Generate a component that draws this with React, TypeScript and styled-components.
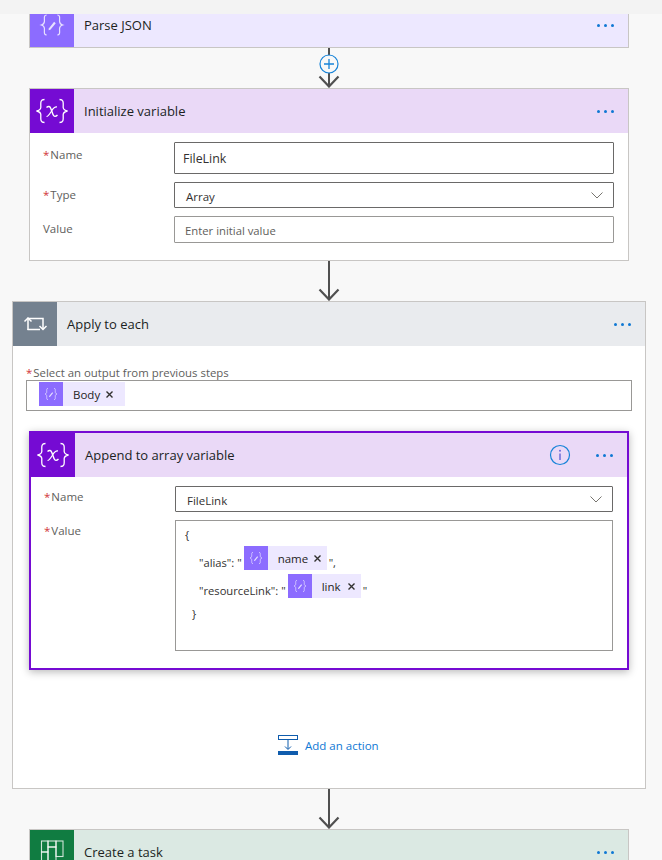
import styled, { createGlobalStyle } from "styled-components";

const GlobalStyle = createGlobalStyle`
  html, body {
    margin: 0;
    padding: 0;
    background: #f8f8f8;
    overflow: hidden;
  }
  * {
    box-sizing: border-box;
  }
`;

const Page = styled.div`
  width: 662px;
  height: 860px;
  overflow: hidden;
  background: #f8f8f8;
  font-family: "Open Sans", "Noto Sans", sans-serif;
  color: #252423;
`;

const TopBand = styled.div`
  height: 14px;
  background: #f3f3f3;
`;

const Canvas = styled.div`
  width: 658px;
  display: flex;
  flex-direction: column;
  align-items: center;
`;

const Card = styled.div`
  width: 600px;
  flex-shrink: 0;
  background: #fff;
  border: 1px solid #c8c6c4;
`;

const ClippedCard = styled(Card)`
  height: 34px;
  border-top: none;
  overflow: hidden;
`;

const ClippedHeader = styled.div`
  margin-top: -11px;
`;

const LoopCard = styled(Card)`
  width: 634px;
`;

const ActiveCard = styled(Card)`
  border: 2px solid #750bd3;
  box-shadow: 0 2px 8px rgba(0, 0, 0, 0.28);
`;

const Header = styled.div<{ $bg: string }>`
  height: 44px;
  display: flex;
  align-items: center;
  background: ${(p) => p.$bg};
`;

const IconTile = styled.div<{ $bg: string }>`
  width: 44px;
  height: 44px;
  flex-shrink: 0;
  display: flex;
  align-items: center;
  justify-content: center;
  background: ${(p) => p.$bg};
`;

const Title = styled.div`
  margin-left: 10px;
  flex: 1;
  font-size: 13px;
  line-height: 18px;
  color: #201f1e;
`;

const Dots = styled.div`
  width: 17px;
  margin-right: 14px;
  display: flex;
  justify-content: space-between;
  span {
    width: 3px;
    height: 3px;
    background: #0f78d4;
    border-radius: 50%;
  }
`;

const InfoIcon = styled.svg`
  margin-right: 25px;
`;

const Fields = styled.div`
  padding: 9px 14px 17px 13px;
  display: flex;
  flex-direction: column;
  gap: 8px;
`;

const Row = styled.div`
  display: grid;
  grid-template-columns: 131px 1fr;
`;

const Label = styled.div<{ $top?: number }>`
  font-size: 11.5px;
  line-height: 16px;
  padding-top: ${(p) => p.$top ?? 5}px;
  color: #605e5c;
`;

const Star = styled.span`
  color: #d13438;
  margin-right: 1px;
`;

const TextBox = styled.div<{ $height: number; $light?: boolean }>`
  height: ${(p) => p.$height}px;
  border: 1px solid ${(p) => (p.$light ? "#999896" : "#6a6968")};
  border-radius: 1px;
  display: flex;
  align-items: center;
  justify-content: space-between;
  background: #fff;
`;

const InputText = styled.span`
  margin: 1px 0 0 8px;
  font-size: 12.4px;
  color: #323130;
`;

const SelectText = styled.span`
  margin: 2px 0 0 11px;
  font-size: 11.5px;
  color: #323130;
`;

const Placeholder = styled.span`
  margin: 2px 0 0 10px;
  font-size: 11.3px;
  color: #605e5c;
`;

const Chevron = styled.svg`
  margin-right: 10px;
`;

const LoopBody = styled.div`
  padding: 20px 0 33px;
  display: flex;
  flex-direction: column;
  align-items: center;
`;

const OutputLabel = styled.div`
  width: 606px;
  height: 14px;
  font-size: 11.4px;
  line-height: 14px;
  color: #605e5c;
`;

const TokenBox = styled.div`
  width: 606px;
  height: 31px;
  margin-bottom: 20px;
  padding: 1px 0 0 12px;
  border: 1px solid #999896;
  display: flex;
  align-items: flex-start;
`;

const Token = styled.span<{ $width: number }>`
  width: ${(p) => p.$width}px;
  height: 24px;
  flex-shrink: 0;
  display: inline-flex;
  align-items: center;
  background: #ede8ff;
  font-size: 11.5px;
  color: #252423;
`;

const TokenIcon = styled.span`
  width: 24px;
  height: 24px;
  flex-shrink: 0;
  display: flex;
  align-items: center;
  justify-content: center;
  background: #8c6cff;
`;

const TokenName = styled.span<{ $gap: number }>`
  margin-left: ${(p) => p.$gap}px;
  flex: 1;
`;

const TokenClose = styled.svg<{ $right: number }>`
  margin-right: ${(p) => p.$right}px;
`;

const CodeBox = styled.div`
  height: 131px;
  padding: 5px 0 0 9px;
  border: 1px solid #999896;
  display: flex;
  flex-direction: column;
  font-size: 11.2px;
  color: #323130;
`;

const BraceLine = styled.div<{ $indent: number }>`
  height: 20px;
  line-height: 17px;
  margin-left: ${(p) => p.$indent}px;
`;

const CodeLine = styled.div`
  height: 24px;
  margin: 0 0 4px 14px;
  display: flex;
  align-items: center;
  gap: 2px;
`;

const CodeText = styled.span`
  padding-top: 8px;
`;

const ClosingBrace = styled(BraceLine)`
  margin-top: 3px;
`;

const AddAction = styled.div`
  margin-top: 65px;
  height: 20px;
  width: 102px;
  display: flex;
  align-items: center;
  gap: 7px;
  font-size: 11.5px;
  color: #0f78d4;
  white-space: nowrap;
`;

function Connector({ plus }: { plus?: boolean }) {
  return (
    <svg width="22" height="40" viewBox="0 0 22 40" style={{ flexShrink: 0 }}>
      <path d="M11 0V38" stroke="#505050" strokeWidth="2" fill="none" />
      <path d="M1.5 28.5L11 38.5L20.5 28.5" stroke="#505050" strokeWidth="2.2" fill="none" />
      {plus && (
        <g>
          <circle cx="11" cy="16" r="9" fill="#f8f8f8" stroke="#1683d8" strokeWidth="1.2" />
          <path d="M11 11V21M6 16H16" stroke="#1683d8" strokeWidth="1.3" fill="none" />
        </g>
      )}
    </svg>
  );
}

function BracePencil({ size }: { size: number }) {
  return (
    <svg width={size} height={size} viewBox="0 0 24 24" fill="none">
      <path
        d="M8 4.5C5.5 4.5 6.5 7 6.3 9.5C6.2 11 5.3 11.6 4 12C5.3 12.4 6.2 13 6.3 14.5C6.5 17 5.5 19.5 8 19.5"
        stroke="#fff"
        strokeOpacity="0.8"
        strokeWidth="0.9"
      />
      <path
        d="M16 4.5C18.5 4.5 17.5 7 17.7 9.5C17.8 11 18.7 11.6 20 12C18.7 12.4 17.8 13 17.7 14.5C17.5 17 18.5 19.5 16 19.5"
        stroke="#fff"
        strokeOpacity="0.8"
        strokeWidth="0.9"
      />
      <path d="M9.6 14.6L13.6 9.6L14.8 10.6L10.8 15.6L9.4 16Z" fill="#fff" fillOpacity="0.8" />
    </svg>
  );
}

function VariableIcon() {
  return (
    <svg width="36" height="30" viewBox="0 0 36 30" fill="none">
      <path
        d="M10.5 3.5C5.5 3.5 7 8 6.8 11.5C6.7 13.6 5 14.4 2.5 15C5 15.6 6.7 16.4 6.8 18.5C7 22 5.5 26.5 10.5 26.5"
        stroke="#fff"
        strokeWidth="1.3"
      />
      <path
        d="M25.5 3.5C30.5 3.5 29 8 29.2 11.5C29.3 13.6 31 14.4 33.5 15C31 15.6 29.3 16.4 29.2 18.5C29 22 30.5 26.5 25.5 26.5"
        stroke="#fff"
        strokeWidth="1.3"
      />
      <path
        d="M12.5 11.5C14.5 9.8 16 10.3 16.8 12.5L19 18.5C19.8 20.7 21.5 21 23.5 19"
        stroke="#fff"
        strokeWidth="1.4"
      />
      <path d="M12.5 20.5C14.5 20.5 15.5 18.5 17.2 15.5C18.8 12.5 20.2 10.5 23 10.8" stroke="#fff" strokeWidth="1.2" />
    </svg>
  );
}

function LoopIcon() {
  return (
    <svg width="24" height="18" viewBox="0 0 24 18" fill="none" stroke="#fff" strokeWidth="1.5">
      <path d="M5 15V3.5H20V14" />
      <path d="M1.5 6.5L5 3L8.5 6.5" />
      <path d="M4.5 14.5H17" />
      <path d="M16.5 11L20 14.5L23.5 11" />
    </svg>
  );
}

function PlannerIcon() {
  return (
    <svg width="24" height="24" viewBox="0 0 24 24" fill="none" stroke="#fff" strokeOpacity="0.8" strokeWidth="1.1">
      <rect x="1.5" y="1" width="6.5" height="11" />
      <rect x="1.5" y="12" width="6.5" height="11" />
      <rect x="8" y="1" width="8" height="6" />
      <rect x="8" y="7" width="8" height="16" />
      <rect x="16" y="1" width="7" height="15.5" />
    </svg>
  );
}

function CloseX({ right }: { right: number }) {
  return (
    <TokenClose $right={right} width="9" height="9" viewBox="0 0 9 9" fill="none" stroke="#323130" strokeWidth="1.4">
      <path d="M1.5 1.5L7.5 7.5M7.5 1.5L1.5 7.5" />
    </TokenClose>
  );
}

function ThreeDots() {
  return (
    <Dots>
      <span />
      <span />
      <span />
    </Dots>
  );
}

function ChevronDown() {
  return (
    <Chevron width="12" height="7" viewBox="0 0 12 7" fill="none" stroke="#77756f" strokeWidth="1">
      <path d="M0.5 0.5L6 6L11.5 0.5" />
    </Chevron>
  );
}

export default function App() {
  return (
    <Page>
      <GlobalStyle />
      <TopBand />
      <Canvas>
        <ClippedCard>
          <ClippedHeader>
            <Header $bg="#ede8ff">
              <IconTile $bg="#8c6cff">
                <BracePencil size={32} />
              </IconTile>
              <Title>Parse JSON</Title>
              <ThreeDots />
            </Header>
          </ClippedHeader>
        </ClippedCard>
        <Connector plus />
        <Card>
          <Header $bg="#ead9f7">
            <IconTile $bg="#750bd3">
              <VariableIcon />
            </IconTile>
            <Title>Initialize variable</Title>
            <ThreeDots />
          </Header>
          <Fields>
            <Row>
              <Label>
                <Star>*</Star>Name
              </Label>
              <TextBox $height={32}>
                <InputText>FileLink</InputText>
              </TextBox>
            </Row>
            <Row>
              <Label>
                <Star>*</Star>Type
              </Label>
              <TextBox $height={26}>
                <SelectText>Array</SelectText>
                <ChevronDown />
              </TextBox>
            </Row>
            <Row>
              <Label>Value</Label>
              <TextBox $height={27} $light>
                <Placeholder>Enter initial value</Placeholder>
              </TextBox>
            </Row>
          </Fields>
        </Card>
        <Connector />
        <LoopCard>
          <Header $bg="#e9ebee">
            <IconTile $bg="#74818f">
              <LoopIcon />
            </IconTile>
            <Title>Apply to each</Title>
            <ThreeDots />
          </Header>
          <LoopBody>
            <OutputLabel>
              <Star>*</Star>Select an output from previous steps
            </OutputLabel>
            <TokenBox>
              <Token $width={86}>
                <TokenIcon>
                  <BracePencil size={18} />
                </TokenIcon>
                <TokenName $gap={10}>Body</TokenName>
                <CloseX right={11} />
              </Token>
            </TokenBox>
            <ActiveCard>
              <Header $bg="#ead9f7">
                <IconTile $bg="#750bd3">
                  <VariableIcon />
                </IconTile>
                <Title>Append to array variable</Title>
                <InfoIcon width="22" height="22" viewBox="0 0 22 22" fill="none">
                  <circle cx="11" cy="11" r="9.5" stroke="#1683d8" strokeWidth="1.2" />
                  <path d="M11 9.5V16" stroke="#6a6ad8" strokeWidth="1.5" />
                  <circle cx="11" cy="6.8" r="1" fill="#6a6ad8" />
                </InfoIcon>
                <ThreeDots />
              </Header>
              <Fields>
                <Row>
                  <Label $top={3}>
                    <Star>*</Star>Name
                  </Label>
                  <TextBox $height={26}>
                    <SelectText>FileLink</SelectText>
                    <ChevronDown />
                  </TextBox>
                </Row>
                <Row>
                  <Label $top={3}>
                    <Star>*</Star>Value
                  </Label>
                  <CodeBox>
                    <BraceLine $indent={0}>{"{"}</BraceLine>
                    <CodeLine>
                      <CodeText>"alias": "</CodeText>
                      <Token $width={83}>
                        <TokenIcon>
                          <BracePencil size={18} />
                        </TokenIcon>
                        <TokenName $gap={10}>name</TokenName>
                        <CloseX right={5} />
                      </Token>
                      <CodeText>",</CodeText>
                    </CodeLine>
                    <CodeLine>
                      <CodeText>"resourceLink": "</CodeText>
                      <Token $width={73}>
                        <TokenIcon>
                          <BracePencil size={18} />
                        </TokenIcon>
                        <TokenName $gap={10}>link</TokenName>
                        <CloseX right={5} />
                      </Token>
                      <CodeText>"</CodeText>
                    </CodeLine>
                    <ClosingBrace $indent={7}>{"}"}</ClosingBrace>
                  </CodeBox>
                </Row>
              </Fields>
            </ActiveCard>
            <AddAction>
              <svg width="20" height="20" viewBox="0 0 20 20" fill="none" stroke="#0f5cad" style={{ flexShrink: 0 }}>
                <rect x="0.5" y="0.5" width="19" height="4" />
                <path d="M10 5V14M7 11.5L10 14.5L13 11.5" />
                <rect x="0" y="16" width="20" height="4" fill="#0f5cad" stroke="none" />
              </svg>
              Add an action
            </AddAction>
          </LoopBody>
        </LoopCard>
        <Connector />
        <Card>
          <Header $bg="#dbe9e3">
            <IconTile $bg="#107c41">
              <PlannerIcon />
            </IconTile>
            <Title>Create a task</Title>
            <ThreeDots />
          </Header>
        </Card>
      </Canvas>
    </Page>
  );
}
